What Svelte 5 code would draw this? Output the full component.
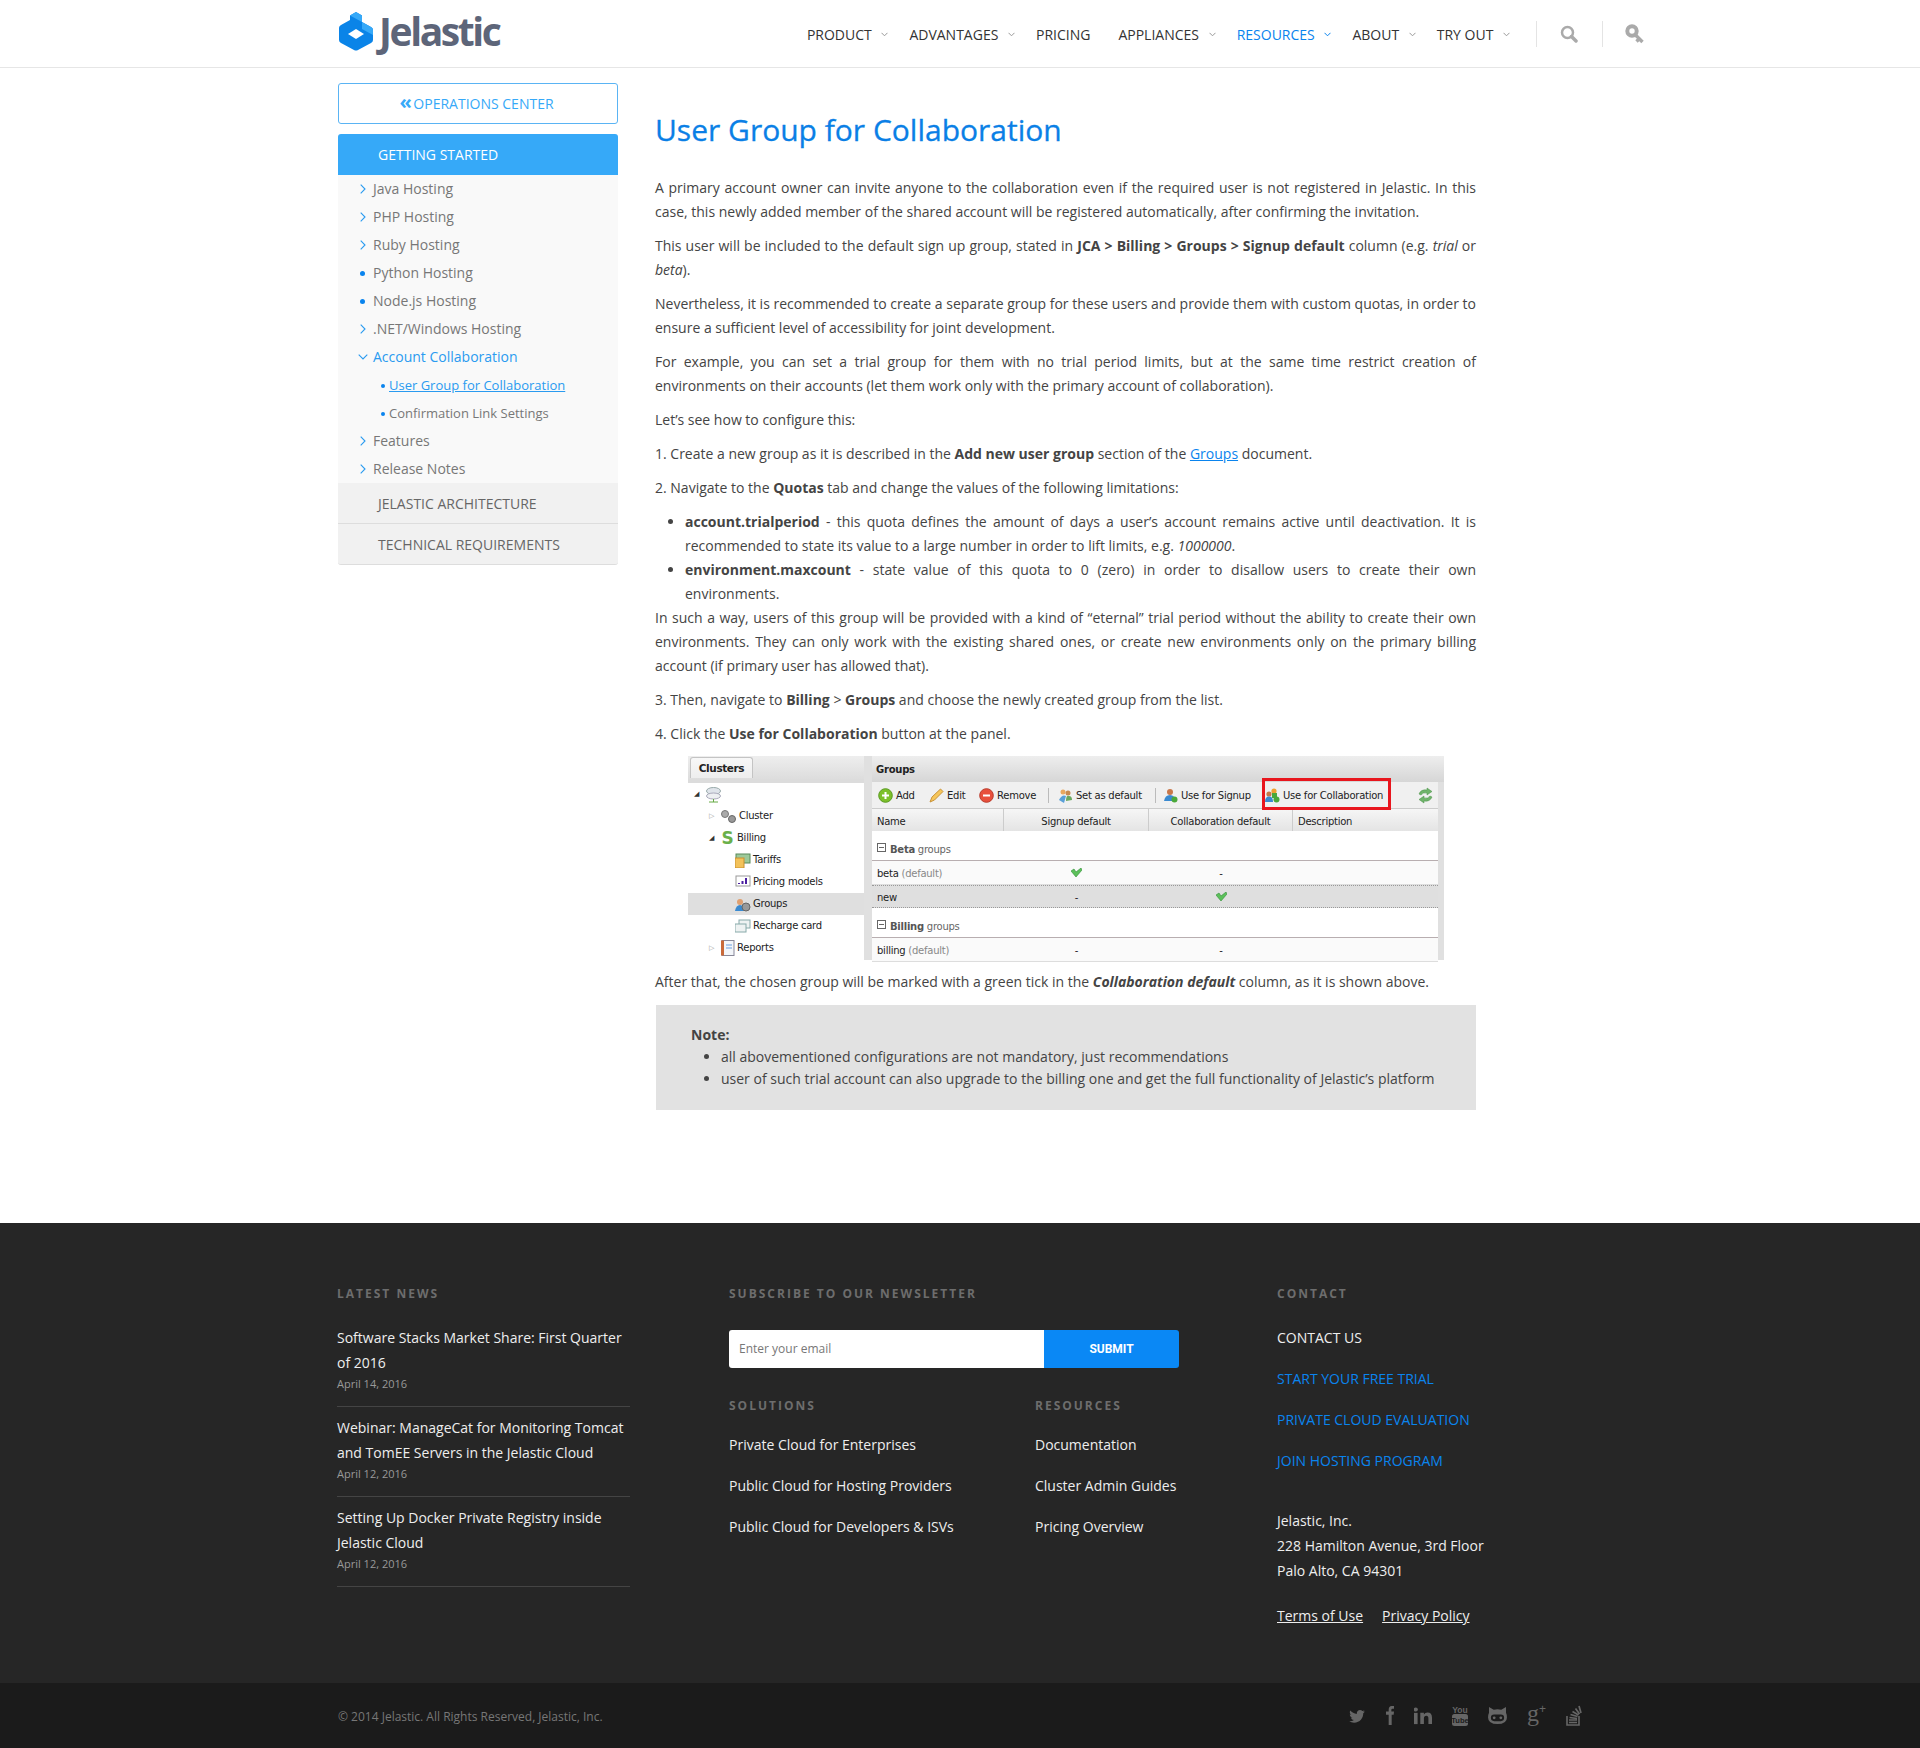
<script>
  const nav = [
    { label: 'PRODUCT', arrow: true },
    { label: 'ADVANTAGES', arrow: true },
    { label: 'PRICING', arrow: false },
    { label: 'APPLIANCES', arrow: true },
    { label: 'RESOURCES', arrow: true, active: true },
    { label: 'ABOUT', arrow: true },
    { label: 'TRY OUT', arrow: true }
  ];

  const news = [
    { title: 'Software Stacks Market Share: First Quarter of 2016', date: 'April 14, 2016' },
    { title: 'Webinar: ManageCat for Monitoring Tomcat and TomEE Servers in the Jelastic Cloud', date: 'April 12, 2016' },
    { title: 'Setting Up Docker Private Registry inside Jelastic Cloud', date: 'April 12, 2016' }
  ];

  const beforeAccount = [
    ['Java Hosting', 'arrow'],
    ['PHP Hosting', 'arrow'],
    ['Ruby Hosting', 'arrow'],
    ['Python Hosting', 'dot'],
    ['Node.js Hosting', 'dot'],
    ['.NET/Windows Hosting', 'arrow']
  ];
</script>

<header class="header">
  <div class="header-inner">
    <div class="logo">
      <svg width="36" height="40" viewBox="0 0 36 40">
        <path d="M18 1 L24 4.500 L24 11 L33 16 Q35 17 35 19 L35 29 Q35 31 33 32 L20 39 Q18 40 16 39 L3 32 Q1 31 1 29 L1 17 Q1 15 3 14 L12 9 L12 4.500 Z" fill="#0a84e8" />
        <path d="M18 1 L24 4.500 L24 11 L33 16 Q35 17 35 19 L35 24 L24 18 L24 11 L12 4.500 Z" fill="#36a9f8" />
        <path d="M18 18 L26 23 L18 28 L10 23 Z" fill="#fff" />
      </svg>
      <span class="logo-text">Jelastic</span>
    </div>
    <nav class="nav">
      {#each nav as item}
        <a class="nav-item" class:active={item.active} href="#top">
          {item.label}
          {#if item.arrow}
            <svg class="nav-arrow" width="7" height="5" viewBox="0 0 7 5"><path d="M.5 .8 L3.500 3.800 L6.500 .8" fill="none" stroke="currentColor" /></svg>
          {/if}
        </a>
      {/each}
      <span class="nav-sep sep-a"></span>
      <svg width="18" height="18" viewBox="0 0 18 18"><circle cx="7.500" cy="7.500" r="5.500" fill="none" stroke="#aaa" stroke-width="2.500" /><path d="M11.500 11.500 L16 16" stroke="#aaa" stroke-width="3.500" stroke-linecap="round" /></svg>
      <span class="nav-sep sep-b"></span>
      <svg width="19" height="21" viewBox="0 0 19 21"><circle cx="7" cy="7" r="4.700" fill="none" stroke="#aaa" stroke-width="4" /><path d="M10 10.500 L17.500 18 M14 15 L11.500 17.500" stroke="#aaa" stroke-width="3.400" /></svg>
    </nav>
  </div>
</header>

<main class="main">
  <aside class="sidebar">
    <a class="ops" href="#top"><span class="ops-mark">«</span> OPERATIONS CENTER</a>
    <div class="side-head">GETTING STARTED</div>
    <ul class="side-list">
      {#each beforeAccount as [label, kind]}
        <li>
          {#if kind === 'arrow'}
            <svg class="mark" width="6" height="10" viewBox="0 0 6 10"><path d="M.7 .7 L5 5 L.7 9.300" fill="none" stroke="#2a9bf0" stroke-width="1.100" /></svg>
          {:else}
            <span class="dot-mark"></span>
          {/if}
          {label}
        </li>
      {/each}
      <li class="open">
        <svg class="mark wide" width="10" height="6" viewBox="0 0 10 6"><path d="M.7 .7 L5 5 L9.300 .7" fill="none" stroke="#2a9bf0" stroke-width="1.100" /></svg>
        Account Collaboration
      </li>
      <li class="sub"><span class="sub-dot"></span><a href="#top">User Group for Collaboration</a></li>
      <li class="sub"><span class="sub-dot"></span>Confirmation Link Settings</li>
      {#each ['Features', 'Release Notes'] as label}
        <li>
          <svg class="mark" width="6" height="10" viewBox="0 0 6 10"><path d="M.7 .7 L5 5 L.7 9.300" fill="none" stroke="#2a9bf0" stroke-width="1.100" /></svg>
          {label}
        </li>
      {/each}
    </ul>
    <div class="side-panel">JELASTIC ARCHITECTURE</div>
    <div class="side-panel last">TECHNICAL REQUIREMENTS</div>
  </aside>

  <article class="content">
    <h1>User Group for Collaboration</h1>
    <p>A primary account owner can invite anyone to the collaboration even if the required user is not registered in Jelastic. In this case, this newly added member of the shared account will be registered automatically, after confirming the invitation.</p>
    <p>This user will be included to the default sign up group, stated in <b>JCA &gt; Billing &gt; Groups &gt; Signup default</b> column (e.g. <i>trial</i> or <i>beta</i>).</p>
    <p>Nevertheless, it is recommended to create a separate group for these users and provide them with custom quotas, in order to ensure a sufficient level of accessibility for joint development.</p>
    <p>For example, you can set a trial group for them with no trial period limits, but at the same time restrict creation of environments on their accounts (let them work only with the primary account of collaboration).</p>
    <p>Let’s see how to configure this:</p>
    <p>1. Create a new group as it is described in the <b>Add new user group</b> section of the <a href="#top">Groups</a> document.</p>
    <p>2. Navigate to the <b>Quotas</b> tab and change the values of the following limitations:</p>
    <ul class="limits">
      <li><b>account.trialperiod</b> - this quota defines the amount of days a user’s account remains active until deactivation. It is recommended to state its value to a large number in order to lift limits, e.g. <i>1000000</i>.</li>
      <li><b>environment.maxcount</b> - state value of this quota to 0 (zero) in order to disallow users to create their own environments.</li>
    </ul>
    <p>In such a way, users of this group will be provided with a kind of “eternal” trial period without the ability to create their own environments. They can only work with the existing shared ones, or create new environments only on the primary billing account (if primary user has allowed that).</p>
    <p>3. Then, navigate to <b>Billing</b> &gt; <b>Groups</b> and choose the newly created group from the list.</p>
    <p>4. Click the <b>Use for Collaboration</b> button at the panel.</p>

    <div class="shot">
      <div class="shot-left">
        <div class="shot-tabs"><span class="shot-tab">Clusters</span></div>
        <div class="tree">
          <div class="tree-row"><span class="tw">◢</span><svg width="17" height="17" viewBox="0 0 17 17"><ellipse cx="8.500" cy="5" rx="7" ry="3.500" fill="#dfe4ea" stroke="#9aa" /><ellipse cx="8.500" cy="10" rx="7" ry="3" fill="#eef0f2" stroke="#aab" /><path d="M8.500 13 V16 M4 16 H13" stroke="#6a4" /></svg></div>
          <div class="tree-row l1"><span class="tw open-tw">▷</span><svg width="17" height="14" viewBox="0 0 17 14"><circle cx="5" cy="5" r="3.500" fill="#aaa" stroke="#777" /><circle cx="12" cy="10" r="3.500" fill="#999" stroke="#666" /></svg>Cluster</div>
          <div class="tree-row l1"><span class="tw">◢</span><span class="dollar">S</span>Billing</div>
          <div class="tree-row l2"><svg width="16" height="15" viewBox="0 0 16 15"><rect x="1" y="1" width="14" height="9" fill="#9cc99a" stroke="#5a8a5a" /><rect x="0" y="5" width="9" height="10" fill="#f3c25a" stroke="#c89030" /></svg>Tariffs</div>
          <div class="tree-row l2"><svg width="16" height="15" viewBox="0 0 16 15"><rect x="1" y="1" width="14" height="10" fill="#fff" stroke="#999" /><path d="M4 9 V8 M7.500 9 V6 M11 9 V3" stroke="#4a1ea0" stroke-width="2" /></svg>Pricing models</div>
          <div class="tree-row l2 picked"><svg width="16" height="15" viewBox="0 0 16 15"><circle cx="5" cy="5" r="3" fill="#e0a070" /><path d="M0 14 Q1 8 5 8 Q9 8 9 14 Z" fill="#3a8ad0" /><circle cx="11" cy="10" r="4" fill="#999" stroke="#666" /></svg>Groups</div>
          <div class="tree-row l2"><svg width="16" height="15" viewBox="0 0 16 15"><rect x="4" y="1" width="11" height="8" fill="#eef2f2" stroke="#8aa" /><rect x="0" y="5" width="11" height="8" fill="#eef2f2" stroke="#8aa" /></svg>Recharge card</div>
          <div class="tree-row l1"><span class="tw open-tw">▷</span><svg width="15" height="16" viewBox="0 0 15 16"><rect x="2" y="0.500" width="12" height="15" fill="#f3f6fa" stroke="#889" /><rect x="1" y="0.500" width="3" height="15" fill="#c96a3a" /><path d="M6 5 H12 M6 8 H12" stroke="#6aa0e0" /></svg>Reports</div>
        </div>
      </div>
      <div class="shot-gap"></div>
      <div class="shot-right">
        <div class="shot-title">Groups</div>
        <div class="shot-tools">
          <span class="tool t-add"><svg width="15" height="15" viewBox="0 0 15 15"><circle cx="7.500" cy="7.500" r="6.800" fill="#7cc02a" stroke="#5a9a20" /><path d="M4 7.500 H11 M7.500 4 V11" stroke="#fff" stroke-width="2" /></svg>Add</span>
          <span class="tool t-edit"><svg width="15" height="15" viewBox="0 0 15 15"><path d="M1 14 L3 9 L11.500 1 L14 3.500 L5.500 12 Z" fill="#f6c65a" stroke="#c8923a" /></svg>Edit</span>
          <span class="tool t-rem"><svg width="15" height="15" viewBox="0 0 15 15"><circle cx="7.500" cy="7.500" r="6.800" fill="#e8503c" stroke="#b93a2a" /><path d="M4 7.500 H11" stroke="#fff" stroke-width="2" /></svg>Remove</span>
          <span class="tool-sep s1"></span>
          <span class="tool t-def"><svg width="15" height="15" viewBox="0 0 15 15"><circle cx="5" cy="4" r="2.500" fill="#e8a860" /><circle cx="10" cy="5" r="2.500" fill="#c88a50" /><path d="M1 12 Q4 6 8 8 L6 15 Z" fill="#5aa0d8" /><path d="M8 13 Q8 7 11 8 Q14 8 14 12 Z" fill="#6aa860" /></svg>Set as default</span>
          <span class="tool-sep s2"></span>
          <span class="tool t-sign"><svg width="15" height="15" viewBox="0 0 15 15"><circle cx="7" cy="4" r="3" fill="#c8784a" /><path d="M1 13 Q2 7 7 7 Q12 7 12 13 Z" fill="#3a8ad0" /><circle cx="11.500" cy="11.500" r="3" fill="#4aa83a" /></svg>Use for Signup</span>
          <span class="tool t-collab"><svg width="15" height="15" viewBox="0 0 15 15"><circle cx="9" cy="3" r="2.600" fill="#f0a030" /><circle cx="4" cy="6" r="2.600" fill="#c8784a" /><path d="M0 14 Q0 8.500 4 8.500 Q8 8.500 8 14 Z" fill="#3a8ad0" /><rect x="7" y="5" width="5" height="5" fill="#4aa83a" /><circle cx="11.500" cy="11.500" r="3" fill="#4aa83a" /></svg>Use for Collaboration</span>
          <svg class="t-refresh" width="17" height="17" viewBox="0 0 17 17"><path d="M2 7 Q4 2 10 3 L10 1 L15 4.500 L10 8 L10 6 Q6 5 4 8 Z M15 10 Q13 15 7 14 L7 16 L2 12.500 L7 9 L7 11 Q11 12 13 9 Z" fill="#6fb46a" stroke="#4a9048" stroke-width=".5" /></svg>
        </div>
        <div class="grid-head">
          <span class="c1">Name</span><span class="c2">Signup default</span><span class="c3">Collaboration default</span><span class="c4">Description</span>
        </div>
        <div class="grp"><span class="minus"></span><b>Beta</b> groups</div>
        <div class="grow">
          <span class="c1">beta <em>(default)</em></span><span class="c2"><svg width="11" height="9" viewBox="0 0 11 9"><path d="M0 3 L3 1 L5 4 L10 0 L11 2 L5 9 Z" fill="#5cc05a" stroke="#2f8f38" stroke-width=".6" /></svg></span><span class="c3">-</span><span class="c4"></span>
        </div>
        <div class="grow sel">
          <span class="c1">new</span><span class="c2">-</span><span class="c3"><svg width="11" height="9" viewBox="0 0 11 9"><path d="M0 3 L3 1 L5 4 L10 0 L11 2 L5 9 Z" fill="#5cc05a" stroke="#2f8f38" stroke-width=".6" /></svg></span><span class="c4"></span>
        </div>
        <div class="grp"><span class="minus"></span><b>Billing</b> groups</div>
        <div class="grow">
          <span class="c1">billing <em>(default)</em></span><span class="c2">-</span><span class="c3">-</span><span class="c4"></span>
        </div>
      </div>
    </div>

    <p class="after">After that, the chosen group will be marked with a green tick in the <b><i>Collaboration default</i></b> column, as it is shown above.</p>

    <div class="note">
      <b>Note:</b>
      <ul>
        <li>all abovementioned configurations are not mandatory, just recommendations</li>
        <li>user of such trial account can also upgrade to the billing one and get the full functionality of Jelastic’s platform</li>
      </ul>
    </div>
  </article>
</main>

<footer class="footer">
  <div class="footer-inner">
    <section class="col-news">
      <h4>LATEST NEWS</h4>
      {#each news as n}
        <div class="news-item">
          <a href="#top">{n.title}</a>
          <span class="news-date">{n.date}</span>
        </div>
      {/each}
    </section>
    <section class="col-mid">
      <h4>SUBSCRIBE TO OUR NEWSLETTER</h4>
      <form class="sub-form" onsubmit={(e) => e.preventDefault()}>
        <input type="text" placeholder="Enter your email" />
        <button type="submit">SUBMIT</button>
      </form>
      <div class="mid-cols">
        <div class="mid-a">
          <h4>SOLUTIONS</h4>
          <a href="#top">Private Cloud for Enterprises</a>
          <a href="#top">Public Cloud for Hosting Providers</a>
          <a href="#top">Public Cloud for Developers &amp; ISVs</a>
        </div>
        <div>
          <h4>RESOURCES</h4>
          <a href="#top">Documentation</a>
          <a href="#top">Cluster Admin Guides</a>
          <a href="#top">Pricing Overview</a>
        </div>
      </div>
    </section>
    <section class="col-contact">
      <h4>CONTACT</h4>
      <a href="#top">CONTACT US</a>
      <a class="blue" href="#top">START YOUR FREE TRIAL</a>
      <a class="blue" href="#top">PRIVATE CLOUD EVALUATION</a>
      <a class="blue" href="#top">JOIN HOSTING PROGRAM</a>
      <address>Jelastic, Inc.<br />228 Hamilton Avenue, 3rd Floor<br />Palo Alto, CA 94301</address>
      <div class="legal"><a href="#top">Terms of Use</a><a href="#top">Privacy Policy</a></div>
    </section>
  </div>
  <div class="bottom">
    <div class="bottom-inner">
      <span class="copy">© 2014 Jelastic. All Rights Reserved, Jelastic, Inc.</span>
      <div class="social">
        <svg width="18" height="18" viewBox="0 0 24 24"><path d="M22.460 6c-.77.35-1.600.58-2.460.69.88-.53 1.560-1.370 1.880-2.380-.83.500-1.750.85-2.720 1.050C18.370 4.500 17.260 4 16 4c-2.350 0-4.270 1.920-4.270 4.290 0 .34.040.67.11.98C8.280 9.090 5.110 7.380 3 4.790c-.37.63-.58 1.370-.58 2.150 0 1.490.75 2.810 1.910 3.560-.71 0-1.370-.2-1.950-.5v.03c0 2.080 1.480 3.820 3.440 4.210a4.220 4.220 0 0 1-1.930.07 4.280 4.280 0 0 0 4 2.980 8.521 8.521 0 0 1-5.330 1.840c-.34 0-.68-.02-1.020-.06C3.440 20.290 5.700 21 8.120 21 16 21 20.330 14.460 20.330 8.790c0-.19 0-.37-.01-.56.84-.6 1.560-1.360 2.140-2.230z" /></svg>
        <svg width="8" height="19" viewBox="0 0 12 24" preserveAspectRatio="none"><path d="M8 7 V5 Q8 3.500 9.500 3.500 H12 V0 H8.500 Q4 0 4 5 V7 H0 V11 H4 V24 H8.500 V11 H11.500 L12 7 Z" /></svg>
        <svg width="18" height="18" viewBox="0 0 20 20"><rect x="0" y="6.500" width="4" height="12.500" /><circle cx="2" cy="2.800" r="2.300" /><path d="M7 6.500 H11 V8.300 Q12.300 6.200 15 6.200 Q20 6.200 20 12 V19 H16 V12.800 Q16 9.700 13.700 9.700 Q11 9.700 11 12.800 V19 H7 Z" /></svg>
        <svg class="yt" width="16" height="21" viewBox="0 0 16 21"><rect x="0" y="9" width="16" height="12" rx="2.500" /><text x="8" y="7.500" text-anchor="middle" font-size="8.500" font-weight="700">You</text><text x="8" y="18" text-anchor="middle" font-size="7.500" font-weight="700" fill="#1b1b1b">Tube</text></svg>
        <svg width="19" height="17" viewBox="0 0 20 18"><path d="M1 0 L6 3 Q10 2 14 3 L19 0 L19 6 Q20 8 20 11 Q20 18 10 18 Q0 18 0 11 Q0 8 1 6 Z" /><rect x="3" y="8" width="14" height="7" rx="3.500" fill="#1b1b1b" /><circle cx="6.500" cy="11.500" r="1.500" /><circle cx="13.500" cy="11.500" r="1.500" /></svg>
        <span class="gplus">g<sup>+</sup></span>
        <svg width="17" height="21" viewBox="0 0 17 21"><path d="M1 11 V20 H13 V11" fill="none" stroke="#666" stroke-width="1.600" /><path d="M3 17.500 H11 M3 15 H11 L3.300 15 M3.500 12.500 L11 13.500 M4.500 9.500 L11.500 11.500 M6.500 6.500 L12.500 10 M9.500 3.500 L13.500 9 M13 1 L15 8" stroke="#666" stroke-width="1.700" fill="none" /></svg>
      </div>
    </div>
  </div>
</footer>

<style>
  :global(body) {
    font-family: "Open Sans", sans-serif;
    font-size: 14px;
    color: #444;
    background: #fff;
  }

  a {
    text-decoration: none;
    color: inherit;
  }

  .header {
    height: 67px;
    border-bottom: 1px solid #e6e6e6;
  }

  .header-inner {
    width: 1306px;
    margin-left: 338px;
    display: flex;
    align-items: center;
    justify-content: space-between;
    height: 67px;
  }

  .logo {
    display: flex;
    align-items: center;
    gap: 5px;
    margin-top: -5px;
  }

  .logo-text {
    font-size: 39px;
    font-weight: 700;
    letter-spacing: -2.400px;
    color: #5d6579;
    line-height: 40px;
  }

  .nav {
    display: flex;
    align-items: center;
    margin-top: 1px;
  }

  .nav-item {
    padding-right: 28px;
    color: #333;
    white-space: nowrap;
  }

  .nav-item.active {
    color: #0a84ee;
  }

  .nav-arrow {
    margin-left: 6px;
    margin-right: -7px;
    vertical-align: 3px;
    color: #999;
  }

  .nav-item.active .nav-arrow {
    color: #0a84ee;
  }

  .nav-sep {
    width: 1px;
    height: 26px;
    background: #e4e4e4;
  }

  .sep-a {
    margin-left: 5px;
    margin-right: 23px;
  }

  .sep-b {
    margin-left: 24px;
    margin-right: 22px;
  }

  .main {
    display: flex;
    margin-left: 338px;
    padding-top: 15px;
    gap: 37px;
  }

  .sidebar {
    width: 280px;
    flex-shrink: 0;
  }

  .ops {
    display: block;
    height: 41px;
    line-height: 39px;
    box-sizing: border-box;
    border: 1px solid #5ab4f4;
    border-radius: 3px;
    text-align: center;
    color: #36a9f8;
    margin-bottom: 10px;
    padding-right: 3px;
  }

  .ops-mark {
    font-size: 20px;
    font-weight: 700;
    line-height: 20px;
    margin-right: -2px;
  }

  .side-head {
    background: #36a9f8;
    color: #fff;
    height: 41px;
    line-height: 41px;
    padding-left: 40px;
    border-radius: 3px 3px 0 0;
  }

  .side-list {
    list-style: none;
    margin: 0;
    padding: 0;
    background: #f9f9f9;
    color: #777;
  }

  .side-list li {
    height: 28px;
    line-height: 28px;
    padding-left: 35px;
    position: relative;
  }

  .side-list li.open {
    color: #2a9bf0;
  }

  .side-list li.sub {
    font-size: 13px;
    padding-left: 51px;
  }

  .side-list li.sub a {
    color: #2a9bf0;
    text-decoration: underline;
  }

  .mark {
    position: absolute;
    left: 22px;
    top: 9px;
  }

  .mark.wide {
    left: 20px;
    top: 11px;
  }

  .dot-mark {
    position: absolute;
    left: 22px;
    top: 12px;
    width: 5px;
    height: 5px;
    border-radius: 50%;
    background: #0a84ee;
  }

  .sub-dot {
    position: absolute;
    left: 43px;
    top: 13px;
    width: 4px;
    height: 4px;
    border-radius: 50%;
    background: #0a84ee;
  }

  .side-panel {
    height: 41px;
    line-height: 41px;
    box-sizing: border-box;
    padding-left: 40px;
    background: #f1f1f1;
    color: #666;
    border-bottom: 1px solid #ddd;
  }

  .side-panel.last {
    border-radius: 0 0 3px 3px;
  }

  .content {
    width: 821px;
    line-height: 24px;
    color: #444;
  }

  h1 {
    font-size: 30px;
    font-weight: 400;
    -webkit-text-stroke: .3px #0a7fe6;
    line-height: 40px;
    color: #0a7fe6;
    margin: 27px 0 26px;
  }

  p {
    margin: 0 0 10px;
    text-align: justify;
  }

  .content a {
    color: #0a84ee;
    text-decoration: underline;
  }

  .limits {
    margin: 0;
    padding-left: 30px;
    text-align: justify;
  }

  .shot {
    width: 756px;
    height: 204px;
    margin: 0 0 10px 33px;
    display: flex;
    font-family: "DejaVu Sans", sans-serif;
    font-size: 10px;
    letter-spacing: -.25px;
    line-height: 14px;
    color: #222;
    background: #fff;
  }

  .shot-left {
    width: 176px;
    overflow: hidden;
  }

  .shot-tabs {
    height: 22px;
    background: linear-gradient(#eee, #ddd);
    border-bottom: 4px solid #dcdcdc;
    padding-left: 2px;
    padding-top: 1px;
  }

  .shot-tab {
    display: inline-block;
    height: 21px;
    line-height: 20px;
    width: 63px;
    text-align: center;
    font-weight: 700;
    font-size: 10.500px;
    letter-spacing: -.4px;
    background: linear-gradient(#f8f8f8, #eee);
    border: 1px solid #c4c4c4;
    border-bottom: none;
    border-radius: 3px 3px 0 0;
    box-sizing: border-box;
  }

  .tree-row {
    height: 22px;
    display: flex;
    align-items: center;
    gap: 2px;
    padding-left: 6px;
    white-space: nowrap;
  }

  .tree-row svg {
    flex-shrink: 0;
  }

  .tree-row.l1 {
    padding-left: 21px;
  }

  .tree-row.l2 {
    padding-left: 47px;
  }

  .tree-row.picked {
    background: #dfdfdf;
  }

  .tw {
    width: 9px;
    font-size: 7px;
    color: #333;
  }

  .open-tw {
    color: #999;
  }

  .dollar {
    color: #6ab04a;
    font-size: 17px;
    font-weight: 700;
    width: 15px;
    text-align: center;
  }

  .shot-gap {
    width: 8px;
    background: #e0e0e0;
  }

  .shot-right {
    width: 572px;
    border-right: 6px solid #e0e0e0;
    box-sizing: border-box;
  }

  .shot-title {
    height: 26px;
    line-height: 27px;
    padding-left: 4px;
    font-weight: 700;
    background: linear-gradient(#eee, #d6d6d6);
    margin-right: -6px;
  }

  .shot-tools {
    height: 26px;
    display: flex;
    align-items: center;
    background: #f0f0f0;
    position: relative;
  }

  .tool {
    display: flex;
    align-items: center;
    gap: 3px;
    position: absolute;
    top: 6px;
    white-space: nowrap;
  }

  .tool svg {
    flex-shrink: 0;
  }

  .t-add { left: 6px; }
  .t-edit { left: 57px; }
  .t-rem { left: 107px; }
  .t-def { left: 186px; }
  .t-sign { left: 291px; }

  .t-collab {
    left: 390px;
    top: -4px;
    height: 32px;
    width: 129px;
    padding-top: 3px;
    border: 3px solid #e8161e;
    box-sizing: border-box;
  }

  .tool-sep {
    position: absolute;
    top: 6px;
    width: 1px;
    height: 15px;
    background: #bbb;
  }

  .s1 { left: 176px; }
  .s2 { left: 283px; }

  .t-refresh {
    position: absolute;
    left: 545px;
    top: 5px;
  }

  .grid-head,
  .grow {
    display: grid;
    grid-template-columns: 132px 145px 144px 145px;
    align-items: center;
  }

  .grid-head {
    height: 23px;
    background: linear-gradient(#f6f6f6, #e4e4e4);
    border-top: 1px solid #ccc;
    box-sizing: border-box;
  }

  .grid-head span {
    height: 22px;
    line-height: 25px;
    border-right: 1px solid #ccc;
    box-sizing: border-box;
  }

  .grid-head .c4 {
    border-right: none;
  }

  .c1 {
    padding-left: 5px;
  }

  .c2,
  .c3 {
    text-align: center;
  }

  .grid-head .c4 {
    padding-left: 5px;
  }

  .grp {
    height: 30px;
    line-height: 38px;
    padding-left: 5px;
    color: #666;
    border-bottom: 1px solid #b8aeb0;
    box-sizing: border-box;
  }

  .grp b {
    color: #555;
  }

  .minus {
    display: inline-block;
    width: 7px;
    height: 7px;
    border: 1px solid #666;
    margin-right: 4px;
    background: linear-gradient(#666, #666) center / 5px 1px no-repeat;
    vertical-align: 1px;
  }

  .grow {
    height: 24px;
    padding-top: 3px;
    background: #fafafa;
    border-bottom: 1px solid #ddd;
    box-sizing: border-box;
  }

  .grow.sel {
    height: 23px;
    padding-top: 2px;
    background: #dfdfdf;
    border-top: 1px dotted #999;
    border-bottom: 1px dotted #999;
  }

  .grow em {
    font-style: normal;
    color: #888;
  }

  .note {
    box-sizing: border-box;
    width: 820px;
    margin: 11px 0 113px 1px;
    padding: 19px 35px 20px;
    background: #e2e2e2;
    line-height: 22px;
  }

  .note ul {
    margin: 0;
    padding-left: 30px;
  }

  .footer {
    background: #262626;
    color: #eee;
  }

  .footer-inner {
    display: flex;
    height: 460px;
    box-sizing: border-box;
    padding: 61px 0 0 337px;
  }

  h4 {
    margin: 0;
    font-size: 12px;
    font-weight: 700;
    letter-spacing: 2px;
    line-height: 20px;
    color: #6d6d6d;
  }

  .col-news {
    width: 293px;
    margin-right: 99px;
  }

  .col-news h4 {
    margin-bottom: 21px;
  }

  .news-item {
    border-bottom: 1px solid #444;
    padding-bottom: 14px;
    margin-bottom: 8px;
    line-height: 25px;
  }

  .news-item a {
    display: block;
  }

  .news-date {
    display: block;
    font-size: 11px;
    line-height: 17px;
    color: #999;
  }

  .col-mid {
    width: 450px;
    margin-right: 98px;
  }

  .sub-form {
    display: flex;
    margin-top: 26px;
    height: 38px;
    margin-bottom: 28px;
  }

  .sub-form input {
    width: 315px;
    box-sizing: border-box;
    height: 38px;
    border: none;
    padding: 0 10px 2px;
    font: 12px "Open Sans", sans-serif;
    border-radius: 3px 0 0 3px;
    background: #fff;
  }

  .sub-form input::placeholder {
    color: #777;
  }

  .sub-form button {
    width: 135px;
    border: none;
    background: #0a88f5;
    color: #fff;
    font: 700 12px Roboto, sans-serif;
    border-radius: 0 3px 3px 0;
  }

  .mid-cols {
    display: flex;
  }

  .mid-a {
    width: 306px;
  }

  .mid-cols h4 {
    margin-bottom: 8px;
  }

  .mid-cols a,
  .col-contact a {
    display: block;
    height: 41px;
    line-height: 41px;
  }

  .col-contact h4 {
    margin-bottom: 13px;
  }

  .col-contact a.blue {
    color: #0a84ee;
  }

  address {
    font-style: normal;
    line-height: 25px;
    margin-top: 27px;
  }

  .legal {
    display: flex;
    gap: 19px;
    margin-top: 17px;
  }

  .legal a {
    text-decoration: underline;
    height: 32px;
    line-height: 32px;
  }

  .bottom {
    background: #1b1b1b;
    height: 65px;
  }

  .bottom-inner {
    display: flex;
    align-items: center;
    height: 65px;
    padding-left: 338px;
    width: 1245px;
    justify-content: space-between;
  }

  .copy {
    font-size: 12px;
    color: #777;
    margin-top: 1px;
  }

  .social {
    display: flex;
    align-items: center;
    gap: 20px;
    fill: #666;
  }

  .yt text {
    font-family: "Liberation Sans", sans-serif;
  }

  .gplus {
    font-family: "Liberation Serif", serif;
    font-size: 24px;
    line-height: 24px;
    color: #666;
    margin-top: -6px;
    width: 19px;
    white-space: nowrap;
  }

  .gplus sup {
    font-family: "Liberation Sans", sans-serif;
    font-size: 12px;
    vertical-align: 8px;
    line-height: 0;
  }
</style>
